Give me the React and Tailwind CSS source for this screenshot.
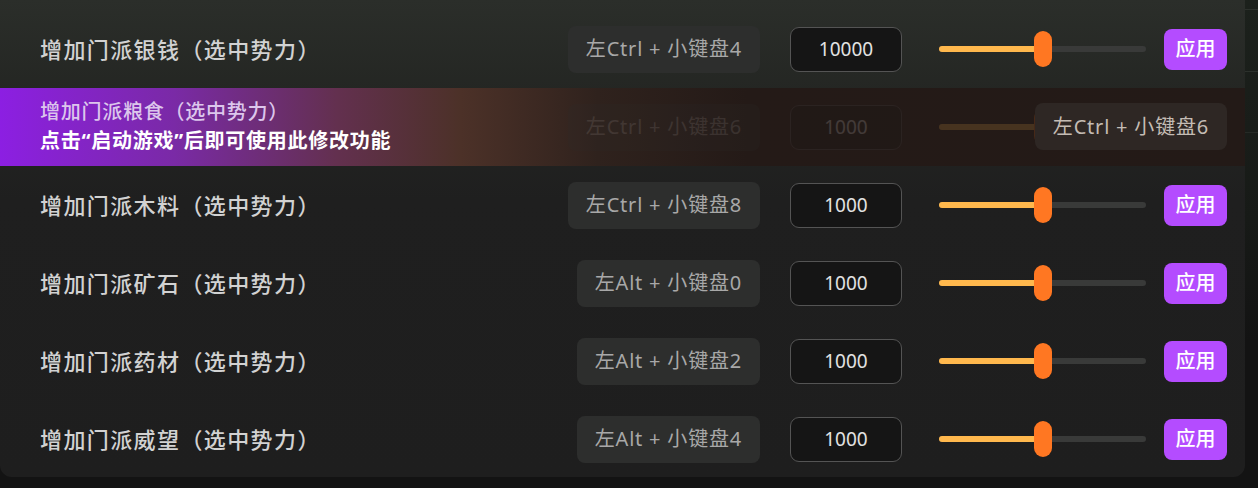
const ROWS = [
  { label: '增加门派银钱（选中势力）', key: '左Ctrl + 小键盘4', value: '10000' },
  { label: '增加门派粮食（选中势力）', key: '左Ctrl + 小键盘6', value: '1000', locked: true },
  { label: '增加门派木料（选中势力）', key: '左Ctrl + 小键盘8', value: '1000' },
  { label: '增加门派矿石（选中势力）', key: '左Alt + 小键盘0', value: '1000' },
  { label: '增加门派药材（选中势力）', key: '左Alt + 小键盘2', value: '1000' },
  { label: '增加门派威望（选中势力）', key: '左Alt + 小键盘4', value: '1000' },
]

const font = { fontFamily: '"Noto Sans", "Noto Sans CJK SC", sans-serif' }

function Slider() {
  return (
    <div className="relative w-[207px] h-9 flex items-center">
      <div className="w-full h-[6px] rounded-full bg-[#393a39] flex">
        <div className="w-[104px] h-full rounded-full bg-[#ffb84d]" />
      </div>
      <div className="absolute left-[95px] top-0 w-[18px] h-9 rounded-full bg-[#ff7722]" />
    </div>
  )
}

function RowContent({ row, locked }) {
  return (
    <div className="flex items-center h-[78px] pl-10 pr-[18px]">
      <div className="flex-1 text-[22px] font-medium text-[#d2d2d2] tracking-[1.4px]">
        {locked ? '' : row.label}
      </div>
      <div className="h-[47px] px-[18px] flex items-center rounded-lg bg-[#2d2e2d] text-[20px] tracking-[0.8px] text-[#a8a8a8]">
        {row.key}
      </div>
      <div className="ml-[30px] w-[112px] h-[45px] rounded-[9px] border border-[#545454] bg-[#151515] flex items-center justify-center text-[19px] text-[#e2e2e2]">
        {row.value}
      </div>
      <div className="ml-[37px]">
        <Slider />
      </div>
      <button className={`ml-[18px] w-[63px] h-[41px] rounded-lg bg-[#b44cff] text-white text-[20px] font-medium flex items-center justify-center ${locked ? 'invisible' : ''}`}>
        应用
      </button>
    </div>
  )
}

export default function App() {
  return (
    <div className="w-[1258px] h-[488px] flex bg-[#131313] overflow-hidden" style={font}>
      <div className="w-[1245px] h-[477px] rounded-b-xl bg-[linear-gradient(180deg,#2b2e2a_0%,#232522_22%,#1f1f1f_42%,#1e1e1e_100%)] pt-[10px] overflow-hidden">
        {ROWS.map(row =>
          row.locked ? (
            <div key={row.label} className="relative h-[78px] bg-[linear-gradient(90deg,#8c1fe2_0%,#7a2aa6_14%,#63304f_27%,#4c3128_37%,#2f221d_48%,#241a17_60%,#231a17_100%)]">
              <div className="opacity-[0.16]">
                <RowContent row={row} locked />
              </div>
              <div className="absolute left-10 top-[9px] flex flex-col">
                <span className="text-[20px] leading-[29px] font-medium tracking-[0.75px] text-[#dcc6ec]">{row.label}</span>
                <span className="text-[20px] leading-[29px] font-bold tracking-[0.75px] text-white">点击“启动游戏”后即可使用此修改功能</span>
              </div>
              <div className="absolute right-[18px] top-[15px] h-[47px] px-[18px] flex items-center rounded-lg bg-[#2e2724] text-[20px] tracking-[0.8px] text-[#c4bcb4]">
                {row.key}
              </div>
            </div>
          ) : (
            <RowContent key={row.label} row={row} />
          )
        )}
      </div>
      <div className="flex-1 flex flex-col bg-[linear-gradient(180deg,#1c211c_0%,#171a17_45%,#131313_70%)]">
        <div className="h-[10px] border-b border-[#2c312c]" />
        <div className="h-[62px] border-b border-[#2c312c]" />
        <div className="h-[61px] border-b border-[#262a26]" />
      </div>
    </div>
  )
}
